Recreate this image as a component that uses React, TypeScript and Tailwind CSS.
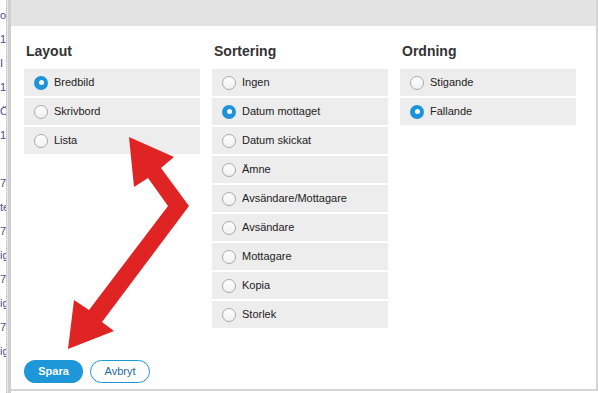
import React from 'react'

const Radio = ({ checked }: { checked?: boolean }) =>
  checked ? (
    <span className="flex h-[14px] w-[14px] shrink-0 items-center justify-center rounded-full bg-[#1d93d9]">
      <span className="h-[5px] w-[5px] rounded-full bg-white" />
    </span>
  ) : (
    <span className="h-[14px] w-[14px] shrink-0 rounded-full border border-[#a9a9a9] bg-gradient-to-b from-white to-[#f1f1f1]" />
  )

const Group = ({ title, items, selected }: { title: string; items: string[]; selected: string }) => (
  <div className="flex w-[176px] flex-col">
    <h2 className="h-[43px] pt-[16px] pl-[2px] text-[14px] leading-[18px] font-bold text-[#333]">{title}</h2>
    <div className="flex flex-col gap-[2px]">
      {items.map((item) => (
        <label key={item} className="flex h-[27px] items-center gap-[6px] bg-[#ededed] pl-[10px] text-[11px] text-[#222]">
          <Radio checked={item === selected} />
          {item}
        </label>
      ))}
    </div>
  </div>
)

const Arrow = () => (
  <svg className="pointer-events-none absolute top-0 left-0" width="598" height="393">
    <polygon
      fill="#e02323"
      points="129,137 174,157 161,168 189,206 102,322 114,331 68,349 74,300 89,310 168,206 148,178 134,187"
    />
  </svg>
)

export default function App() {
  const bits = ['or', '1:', 'I', '1:', 'Ö', '1:', '', '7', 'te', '7', 'ig', '7', 'ig', '7', 'ig']
  return (
    <div className="relative flex h-[393px] w-[598px] overflow-hidden bg-white font-['Liberation_Sans',Arial,sans-serif]">
      <div className="flex w-[11px] shrink-0">
        <div className="flex w-[6px] flex-col gap-[10px] overflow-hidden pt-[8px] text-[11px] leading-[14px] text-[#44508a]">
          {bits.map((b, i) => (
            <span key={i} className="h-[14px] whitespace-nowrap">{b}</span>
          ))}
        </div>
        <div className="w-[2px] border-l border-dotted border-[#bbb] bg-[#e6e6e6]" />
        <div className="w-[3px] bg-[#cfcfcf]" />
      </div>
      <div className="flex h-[391px] flex-1 flex-col border-r-2 border-b-2 border-[#d6d6d6]">
        <div className="h-[26px] bg-[#e3e3e3]" />
        <div className="flex gap-[12px] pl-[13px]">
          <Group title="Layout" items={['Bredbild', 'Skrivbord', 'Lista']} selected="Bredbild" />
          <Group
            title="Sortering"
            items={['Ingen', 'Datum mottaget', 'Datum skickat', 'Ämne', 'Avsändare/Mottagare', 'Avsändare', 'Mottagare', 'Kopia', 'Storlek']}
            selected="Datum mottaget"
          />
          <Group title="Ordning" items={['Stigande', 'Fallande']} selected="Fallande" />
        </div>
        <div className="mt-auto mb-[6px] flex gap-[7px] pl-[13px]">
          <button className="h-[23px] w-[59px] rounded-full bg-[#1d97d8] text-[11px] font-bold text-white">Spara</button>
          <button className="h-[23px] w-[60px] rounded-full border border-[#1d97d8] bg-white text-[11px] text-[#1b6c9e]">Avbryt</button>
        </div>
      </div>
      <Arrow />
    </div>
  )
}
